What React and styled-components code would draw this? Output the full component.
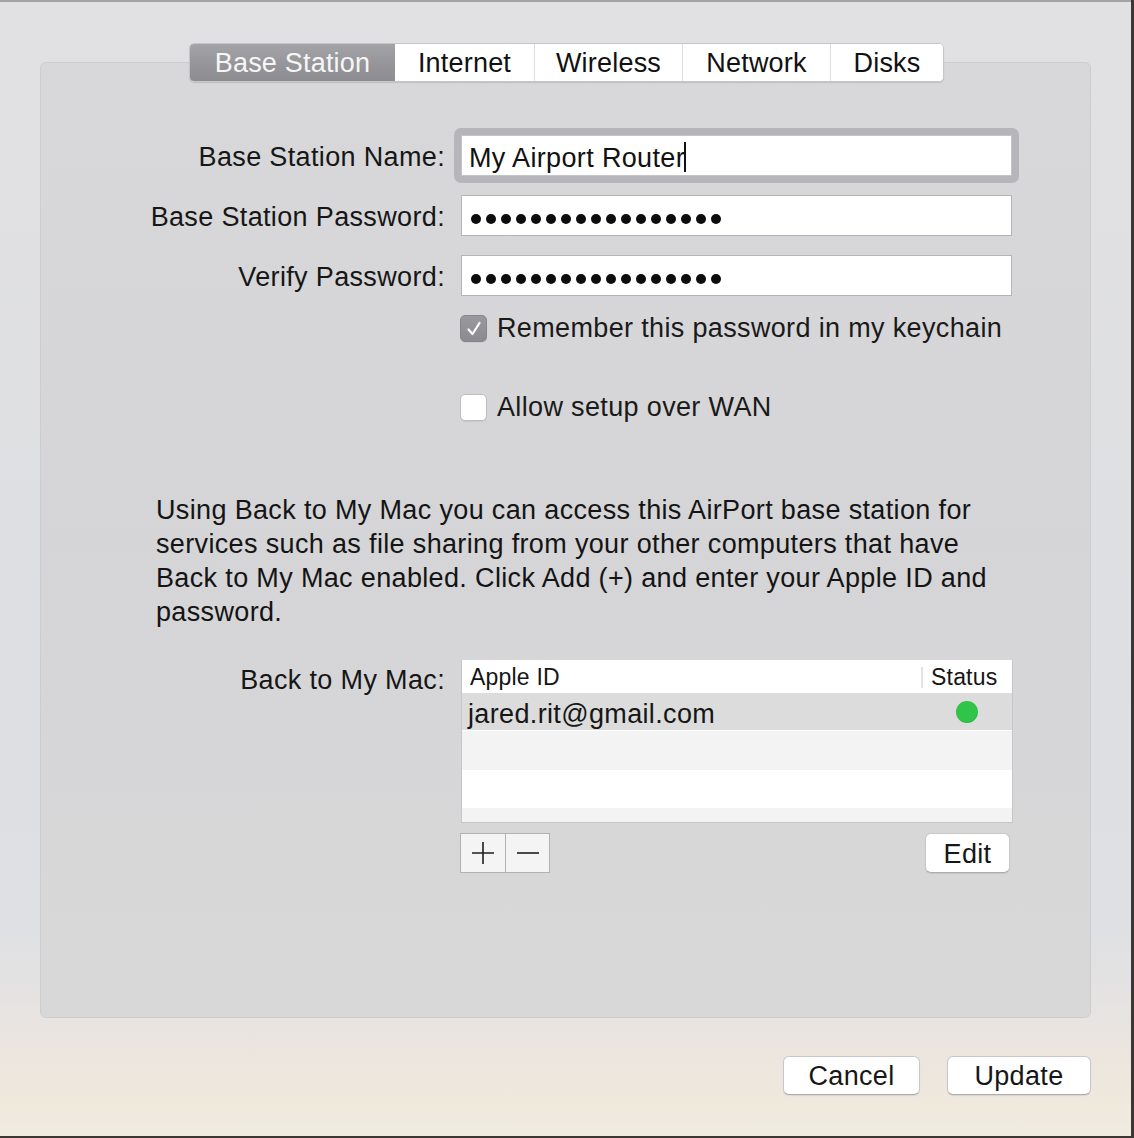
import React from 'react';
import styled, { createGlobalStyle } from 'styled-components';

const GlobalStyle = createGlobalStyle`
  html, body {
    margin: 0;
    padding: 0;
    background: #3c3733;
  }
  * {
    box-sizing: border-box;
  }
  body {
    font-family: "Liberation Sans", Arial, sans-serif;
    color: #161616;
    letter-spacing: 0.35px;
  }
`;

const Window = styled.div`
  width: 1131px;
  height: 1136px;
  border-top: 2px solid #a3a3a5;
  background: linear-gradient(
    180deg,
    #e1e1e3 0%,
    #dedfe2 60%,
    #dfe0e3 82%,
    #e5e3e2 88%,
    #ebe5df 92%,
    #efe8dd 97%,
    #efece1 100%
  );
  padding-top: 41px;
  display: flex;
  flex-direction: column;
`;

const TabBar = styled.div`
  position: relative;
  z-index: 1;
  align-self: center;
  margin-left: 2px;
  display: flex;
  height: 39px;
  border-radius: 5px;
  background: #fff;
  border: 1px solid #c6c6c8;
  box-shadow: 0 1px 1px rgba(0, 0, 0, 0.12);
  overflow: hidden;
`;

const Tab = styled.div`
  display: flex;
  align-items: center;
  justify-content: center;
  padding-top: 2px;
  width: ${p => p.w}px;
  font-size: 27px;
  letter-spacing: 0.2px;
  color: ${p => (p.active ? '#f6f6f6' : '#111')};
  background: ${p =>
    p.active ? 'linear-gradient(180deg, #a4a4a8 0%, #97979b 50%, #8d8d91 100%)' : '#fff'};
  border-left: ${p => (p.first || p.afterActive ? 'none' : '1px solid #dedede')};
`;

const Panel = styled.div`
  margin: -20px 40px 0;
  height: 956px;
  border-radius: 6px;
  border: 1px solid #cdcdcf;
  background: linear-gradient(180deg, #d8d8da 0%, #d5d5d7 50%, #d8d8d9 100%);
  padding-top: 65px;
  display: flex;
  flex-direction: column;
`;

const Row = styled.div`
  display: flex;
  align-items: ${p => p.align || 'center'};
  margin-top: ${p => p.mt || 0}px;
`;

const Label = styled.div`
  width: 404px;
  padding-top: ${p => p.pt || 0}px;
  text-align: right;
  font-size: 27px;
  white-space: nowrap;
  flex-shrink: 0;
`;

const Control = styled.div`
  margin-left: 9px;
`;

const FieldFrame = styled.div`
  width: 565px;
  height: 55px;
  padding: 7px;
  border-radius: 7px;
  background: ${p => (p.focused ? '#b6b6ba' : 'transparent')};
`;

const Field = styled.div`
  height: 41px;
  background: #fff;
  border: 1px solid ${p => (p.focused ? '#c4c4c6' : '#b4b4b6')};
  display: flex;
  align-items: center;
  padding: ${p => (p.focused ? '6px' : '0')} 0 0 7px;
  font-size: 27px;
  color: #111;
`;

const Caret = styled.span`
  display: inline-block;
  width: 2px;
  height: 30px;
  background: #111;
  margin: -3px 0 0 -1px;
`;

const Dots = styled.div`
  display: flex;
  gap: 5px;
  padding-left: 2px;
  margin-top: 6px;
`;

const Dot = styled.span`
  width: 10px;
  height: 10px;
  border-radius: 50%;
  background: #0c0c0c;
`;

const CheckRow = styled.div`
  display: flex;
  align-items: center;
  margin-left: 6px;
  gap: 10px;
  font-size: 27px;
  color: #1a1a1a;
`;

const Box = styled.span`
  width: 27px;
  height: 27px;
  border-radius: 5px;
  display: flex;
  align-items: center;
  justify-content: center;
  background: ${p => (p.checked ? 'linear-gradient(180deg, #9a9a9e, #8b8b8f)' : '#fff')};
  border: 1px solid ${p => (p.checked ? '#85858a' : '#bcbcbe')};
  box-shadow: 0 1px 0 rgba(0, 0, 0, 0.06);
`;

const Description = styled.p`
  margin: 70px 0 0 115px;
  width: 850px;
  font-size: 27px;
  line-height: 34px;
  color: #141414;
`;

const Table = styled.div`
  margin-left: 7px;
  width: 552px;
  height: 163px;
  border: 1px solid #c6c6c8;
  border-top: none;
  background: #fff;
  overflow: hidden;
`;

const HeaderRow = styled.div`
  display: flex;
  height: 33px;
  align-items: center;
  padding-top: 2px;
  background: #fff;
  font-size: 23px;
  letter-spacing: 0.2px;
  color: #151515;
`;

const HeaderCell = styled.div`
  flex: ${p => (p.grow ? 1 : 'none')};
  width: ${p => (p.grow ? 'auto' : '91px')};
  padding-left: 8px;
  height: 21px;
  line-height: 21px;
  border-left: ${p => (p.grow ? 'none' : '2px solid #e2e2e2')};
`;

const BodyRow = styled.div`
  display: flex;
  align-items: center;
  height: ${p => p.h || 38}px;
  background: ${p => p.bg};
  border-bottom: ${p => (p.selected ? '1px solid #fff' : 'none')};
  font-size: 27px;
  color: #161616;
`;

const IdCell = styled.div`
  flex: 1;
  padding: 6px 0 0 6px;
`;

const StatusCell = styled.div`
  width: 91px;
  display: flex;
  justify-content: center;
`;

const StatusDot = styled.span`
  width: 22px;
  height: 22px;
  border-radius: 50%;
  background: #30c44a;
  box-shadow: inset 0 -1px 1px rgba(0, 0, 0, 0.08);
`;

const TableTools = styled.div`
  display: flex;
  justify-content: space-between;
  align-items: flex-start;
  width: 550px;
  margin: 10px 0 0 6px;
`;

const Segment = styled.div`
  display: flex;
  border: 1px solid #b2b2b4;
  background: #f4f4f4;
  height: 40px;
`;

const SegmentButton = styled.div`
  width: 44px;
  display: flex;
  align-items: center;
  justify-content: center;
  border-left: ${p => (p.first ? 'none' : '1px solid #b2b2b4')};
`;

const PushButton = styled.div`
  width: ${p => p.w}px;
  height: ${p => p.h || 39}px;
  display: flex;
  align-items: center;
  justify-content: center;
  padding-top: 2px;
  background: #fff;
  border-radius: 6px;
  border: 1px solid #c8c8ca;
  border-bottom-color: #acacae;
  box-shadow: 0 1px 1px rgba(0, 0, 0, 0.08);
  font-size: 27px;
  color: #171717;
`;

const Footer = styled.div`
  display: flex;
  justify-content: flex-end;
  gap: 27px;
  margin: 38px 40px 0 0;
`;

const tabs = [
  { name: 'Base Station', w: 205 },
  { name: 'Internet', w: 139 },
  { name: 'Wireless', w: 148 },
  { name: 'Network', w: 148 },
  { name: 'Disks', w: 113 },
];

const PasswordDots = () => (
  <Dots>
    {Array.from({ length: 17 }).map((_, i) => (
      <Dot key={i} />
    ))}
  </Dots>
);

const App = () => {
  return (
    <>
      <GlobalStyle />
      <Window>
        <TabBar>
          {tabs.map((t, i) => (
            <Tab
              key={t.name}
              w={t.w}
              active={i === 0}
              first={i === 0}
              afterActive={i === 1}
            >
              {t.name}
            </Tab>
          ))}
        </TabBar>

        <Panel>
          <Row>
            <Label pt={3}>Base Station Name:</Label>
            <Control>
              <FieldFrame focused>
                <Field focused>
                  My Airport Router
                  <Caret />
                </Field>
              </FieldFrame>
            </Control>
          </Row>
          <Row mt={5}>
            <Label pt={3}>Base Station Password:</Label>
            <Control>
              <FieldFrame>
                <Field>
                  <PasswordDots />
                </Field>
              </FieldFrame>
            </Control>
          </Row>
          <Row mt={5}>
            <Label pt={3}>Verify Password:</Label>
            <Control>
              <FieldFrame>
                <Field>
                  <PasswordDots />
                </Field>
              </FieldFrame>
            </Control>
          </Row>

          <Row mt={10}>
            <Label />
            <Control>
              <CheckRow>
                <Box checked>
                  <svg width="18" height="18" viewBox="0 0 18 18">
                    <path
                      d="M3.5 9.5 L7.5 14 L14.5 3"
                      fill="none"
                      stroke="#fff"
                      strokeWidth="2.2"
                      strokeLinecap="round"
                      strokeLinejoin="round"
                    />
                  </svg>
                </Box>
                Remember this password in my keychain
              </CheckRow>
            </Control>
          </Row>
          <Row mt={48}>
            <Label />
            <Control>
              <CheckRow>
                <Box />
                Allow setup over WAN
              </CheckRow>
            </Control>
          </Row>

          <Description>
            Using Back to My Mac you can access this AirPort base station for
            services such as file sharing from your other computers that have
            Back to My Mac enabled. Click Add (+) and enter your Apple ID and
            password.
          </Description>

          <Row align="flex-start" mt={31}>
            <Label pt={5}>Back to My Mac:</Label>
            <Control>
              <Table>
                <HeaderRow>
                  <HeaderCell grow>Apple ID</HeaderCell>
                  <HeaderCell>Status</HeaderCell>
                </HeaderRow>
                <BodyRow bg="#dcdcdd" selected>
                  <IdCell>jared.rit@gmail.com</IdCell>
                  <StatusCell>
                    <StatusDot />
                  </StatusCell>
                </BodyRow>
                <BodyRow bg="#f3f3f3" h={39} />
                <BodyRow bg="#fff" h={38} />
                <BodyRow bg="#f3f3f3" h={14} />
              </Table>
              <TableTools>
                <Segment>
                  <SegmentButton first>
                    <svg width="24" height="24" viewBox="0 0 24 24">
                      <path d="M12 1 V23 M1 12 H23" stroke="#1e1e1e" strokeWidth="1.6" />
                    </svg>
                  </SegmentButton>
                  <SegmentButton>
                    <svg width="24" height="24" viewBox="0 0 24 24">
                      <path d="M1 12 H23" stroke="#1e1e1e" strokeWidth="1.6" />
                    </svg>
                  </SegmentButton>
                </Segment>
                <PushButton w={85} h={40}>Edit</PushButton>
              </TableTools>
            </Control>
          </Row>
        </Panel>

        <Footer>
          <PushButton w={137}>Cancel</PushButton>
          <PushButton w={144}>Update</PushButton>
        </Footer>
      </Window>
    </>
  );
};

export default App;
